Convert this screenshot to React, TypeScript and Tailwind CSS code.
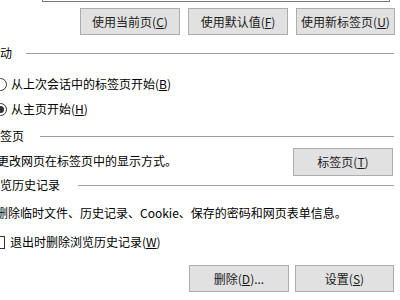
import React from "react";

const Btn = ({ children, w = "w-[100px]" }: { children: React.ReactNode; w?: string }) => (
  <div className={`${w} h-[27px] shrink-0 bg-[#e1e1e1] border border-[#adadad] flex items-center justify-center text-[12px] text-[#1a1a1a]`}>
    {children}
  </div>
);

const Heading = ({ text, gap }: { text: string; gap: string }) => (
  <div className="flex items-center h-[16px] mr-[6px]">
    <span className="leading-[16px] whitespace-nowrap">{text}</span>
    <div className={`flex-1 h-px bg-[#a0a0a0] ${gap}`} />
  </div>
);

export default function App() {
  return (
    <div
      className="w-[400px] h-[300px] overflow-hidden bg-white text-[12px] text-black"
      style={{ fontFamily: '"Noto Sans CJK SC", "Noto Sans", sans-serif' }}
    >
      <div className="ml-[-12px] w-[412px] flex flex-col">
        <div className="ml-[54px] w-[348px] h-[2px] border-x border-b border-[#7a7a7a]" />
        <div className="mt-[6px] ml-[92px] flex gap-[8px]">
          <Btn>使用当前页(<u>C</u>)</Btn>
          <Btn>使用默认值(<u>F</u>)</Btn>
          <Btn w="w-[99px]">使用新标签页(<u>U</u>)</Btn>
        </div>
        <div className="mt-[10px]">
          <Heading text="启动" gap="ml-[14px]" />
        </div>
        <div className="mt-[15px] flex items-center h-[16px]">
          <div className="ml-[6px] w-[13px] h-[13px] rounded-full border border-[#333] bg-white" />
          <span className="ml-[4px] leading-[16px] whitespace-nowrap">从上次会话中的标签页开始(<u>B</u>)</span>
        </div>
        <div className="mt-[9px] flex items-center h-[16px]">
          <div className="ml-[6px] w-[13px] h-[13px] rounded-full border border-[#333] bg-white flex items-center justify-center">
            <div className="w-[7px] h-[7px] rounded-full bg-[#333]" />
          </div>
          <span className="ml-[4px] leading-[16px] whitespace-nowrap">从主页开始(<u>H</u>)</span>
        </div>
        <div className="mt-[11px]">
          <Heading text="标签页" gap="ml-[16px]" />
        </div>
        <div className="mt-[4px] h-[28px] flex items-center justify-between mr-[7px]">
          <span className="ml-[9px] pb-[3px] leading-[16px] whitespace-nowrap">更改网页在标签页中的显示方式。</span>
          <Btn w="w-[100px] !h-[28px]">标签页(<u>T</u>)</Btn>
        </div>
        <div className="mt-[1px]">
          <Heading text="浏览历史记录" gap="ml-[18px]" />
        </div>
        <div className="mt-[12px] ml-[8px] h-[16px] leading-[16px] whitespace-nowrap">
          删除临时文件、历史记录、Cookie、保存的密码和网页表单信息。
        </div>
        <div className="mt-[13px] flex items-center h-[16px]">
          <div className="ml-[4px] w-[13px] h-[13px] border border-[#333] bg-white" />
          <span className="ml-[5px] leading-[16px] whitespace-nowrap">退出时删除浏览历史记录(<u>W</u>)</span>
        </div>
        <div className="mt-[15px] ml-[201px] flex gap-[6px]">
          <Btn>删除(<u>D</u>)...</Btn>
          <Btn w="w-[99px]">设置(<u>S</u>)</Btn>
        </div>
      </div>
    </div>
  );
}
